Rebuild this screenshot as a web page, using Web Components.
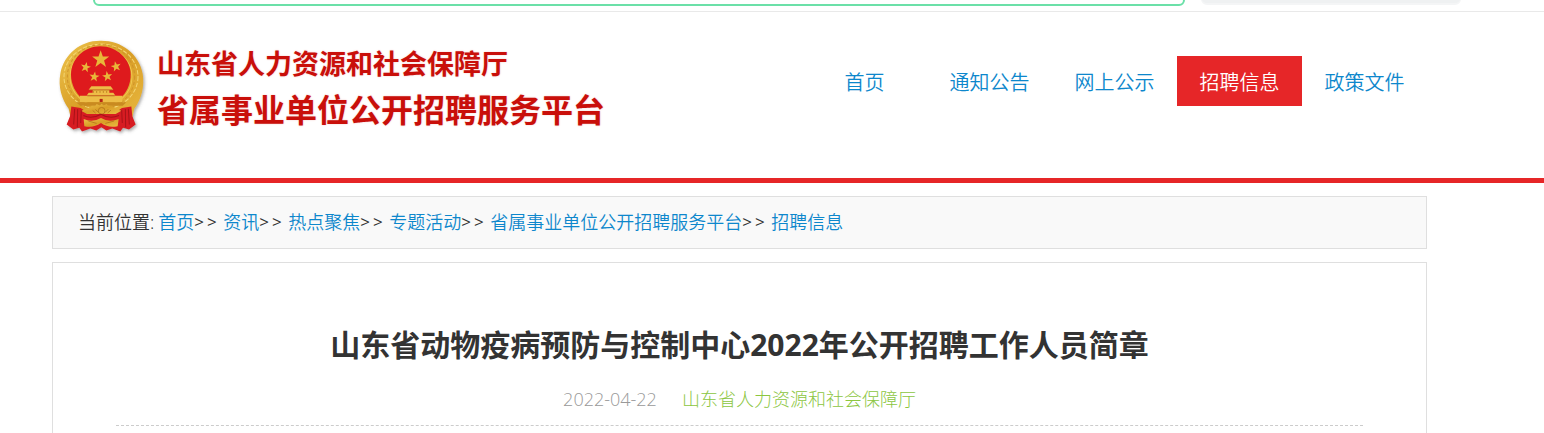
<!DOCTYPE html>
<html lang="zh-CN">
<head>
<meta charset="utf-8">
<meta name="viewport" content="width=device-width, initial-scale=1">
<title>山东省动物疫病预防与控制中心2022年公开招聘工作人员简章</title>
<style>
  body {
    margin: 0;
    min-height: 100vh;
    display: flex;
    flex-direction: column;
    background: #fff;
    color: #333;
    font: 18px/26px "Open Sans", "Noto Sans CJK SC", sans-serif;
    --brand: #e62628;
    --link: #0d87cc;
    --line: #dfdfdf;
    --gutter-start: 52px;
    --gutter-end: 117px;
  }
  article-card { flex: 1; }
</style>
</head>
<body>
<top-strip></top-strip>
<site-header>
  <site-logo slot="logo">
    <span slot="org">山东省人力资源和社会保障厅</span>
    <span slot="platform">省属事业单位公开招聘服务平台</span>
  </site-logo>
  <nav-item>首页</nav-item>
  <nav-item>通知公告</nav-item>
  <nav-item>网上公示</nav-item>
  <nav-item active>招聘信息</nav-item>
  <nav-item>政策文件</nav-item>
</site-header>
<bread-crumbs>
  <span slot="label">当前位置:</span>
  <crumb-link>首页</crumb-link>
  <crumb-link>资讯</crumb-link>
  <crumb-link>热点聚焦</crumb-link>
  <crumb-link>专题活动</crumb-link>
  <crumb-link>省属事业单位公开招聘服务平台</crumb-link>
  <crumb-link last>招聘信息</crumb-link>
</bread-crumbs>
<article-card>
  <span slot="title">山东省动物疫病预防与控制中心2022年公开招聘工作人员简章</span>
  <time slot="date" datetime="2022-04-22">2022-04-22</time>
  <span slot="source">山东省人力资源和社会保障厅</span>
</article-card>

<script>
const define = (name, html) => customElements.define(name, class extends HTMLElement {
  constructor() {
    super();
    this.attachShadow({ mode: "open" }).innerHTML = html;
  }
});

define("top-strip", `
  <style>
    :host { display: block; }
    form {
      display: flex; align-items: flex-end; gap: 16px;
      height: 11px; overflow: hidden; padding: 0 83px 0 93px;
      border-bottom: 1px solid #e9e9e9; box-sizing: content-box;
    }
    input {
      flex: 1; min-width: 0; height: 38px; box-sizing: border-box; margin: 0 0 5px;
      border: 2px solid #6be0a8; border-radius: 6px; background: #fff; outline: 0;
    }
    button {
      width: 260px; height: 38px; box-sizing: border-box; margin: 0 0 6px; padding: 0;
      border: 1px solid #f4f5f6; border-bottom-width: 2px; border-radius: 6px; background: #eff1f2;
    }
  </style>
  <form><input type="text" aria-label="地址"><button type="button" aria-label="搜索"></button></form>`);

define("state-emblem", `
  <style>:host { display: block; } svg { display: block; width: 90px; height: 98px; }</style>
  <svg viewBox="24 12 270 288" preserveAspectRatio="none" role="img" aria-label="徽标">
    <defs>
      <linearGradient id="gold" x1="0" y1="0" x2="1" y2="1">
        <stop offset="0" stop-color="#edc44d"/><stop offset=".5" stop-color="#d99e27"/><stop offset="1" stop-color="#eabb42"/>
      </linearGradient>
      <filter id="shade" x="-20%" y="-20%" width="140%" height="140%">
        <feDropShadow dx="4" dy="5" stdDeviation="4" flood-color="#555" flood-opacity=".5"/>
      </filter>
      <path id="star" d="M0-10 2.4-3.2 9.5-3.1 3.8 1.2 5.9 8.1 0 4-5.9 8.1-3.8 1.2-9.5-3.1-2.4-3.2Z"/>
    </defs>
    <g filter="url(#shade)">
      <path fill="url(#gold)" d="M154 20C94 18 42 58 31 117c-7 38 4 74 25 103l8 34 30 20h121l30-20 8-34c22-30 31-66 25-103C267 58 214 20 154 20Z"/>
      <path fill="#d71d20" d="M64 213l28 5 20 13 42-5 42 5 20-13 28-5 3 29 10 24-20 15-18-5-8 11-24-9-18 6-15-10-15 10-18-6-25 9-8-11-18 5-20-15 10-24Z"/>
    </g>
    <g fill="none">
      <ellipse cx="153" cy="126" rx="111" ry="96" stroke="#f4d674" stroke-width="3" stroke-dasharray="13 5"/>
      <ellipse cx="153" cy="126" rx="101" ry="94" stroke="#cf932a" stroke-width="3" stroke-dasharray="9 7"/>
      <ellipse cx="153" cy="126" rx="93" ry="87" stroke="#f0c74f" stroke-width="3"/>
    </g>
    <path fill="#de1a1d" d="M151 36c-49 0-88 37-88 83 0 30 14 54 33 70 30 10 84 10 115 0 18-16 31-40 31-69 0-46-41-84-91-84Z"/>
    <g fill="#e9b739">
      <use href="#star" transform="translate(152 75) scale(2.7)"/>
      <use href="#star" transform="translate(107 98) rotate(12) scale(1.6)"/>
      <use href="#star" transform="translate(198 96) rotate(-12) scale(1.6)"/>
      <use href="#star" transform="translate(133 126) rotate(8) scale(1.6)"/>
      <use href="#star" transform="translate(172 125) rotate(-8) scale(1.6)"/>
    </g>
    <g fill="#edbd47">
      <path d="M124 154h58l8 10h-74Z"/>
      <path d="M128 165h50v8h-50ZM116 173h74l6 8h-86Z"/>
      <path d="M90 182h127v18H90Z"/>
    </g>
    <path stroke="#a96412" stroke-width="2" fill="none" d="M118 165h70M112 182h82M130 168v5m10-5v5m10-5v5m10-5v5m10-5v5"/>
    <path fill="#b62015" d="M149 191h9v9h-9Z"/>
    <path fill="#c98a20" d="M78 201h151l-11 10H91Z"/>
    <g fill="url(#gold)">
      <path d="M116 219l10-8 8 3 6-8 9 4 6-5 6 5 9-4 6 8 8-3 10 8 20 7-17 9h-86l-18-9Z"/>
      <path d="M101 250q25 12 52-3 26 15 53 3l-3 21q-27 7-50-9-25 16-50 9Z"/>
    </g>
    <g fill="none" stroke="#aa6916" stroke-width="2">
      <circle cx="155" cy="226" r="10"/><path d="M136 222l10 9m-18-6 9 8m38-12-10 10m18-7-10 8M115 256l25 7m52-7-26 7"/>
    </g>
    <g fill="none" stroke="#a81318" stroke-width="3">
      <path d="M74 220l-3 46m12-45-1 53m12-50-2 38m143-42 3 46m-12-45 1 53m-12-50 2 38M100 240q25 12 53-4 26 16 54 4"/>
    </g>
  </svg>`);

define("site-logo", `
  <style>
    :host { display: block; }
    a { display: flex; align-items: center; gap: 9px; color: #c90f0a; text-decoration: none; font-weight: 700; white-space: nowrap; }
    .names { display: flex; flex-direction: column; line-height: 46px; text-shadow: 0 0 2px #f3c9c6; }
    .org { font-size: 27px; }
    .platform { font-size: 32px; }
  </style>
  <a href="#"><state-emblem></state-emblem>
    <span class="names"><span class="org"><slot name="org"></slot></span><span class="platform"><slot name="platform"></slot></span></span>
  </a>`);

define("nav-item", `
  <style>
    :host { display: block; }
    a { display: block; width: 125px; padding-top: 4px; font-size: 20px; font-weight: 350; line-height: 46px; text-align: center; text-decoration: none; color: var(--link); white-space: nowrap; }
    :host([active]) a { background: var(--brand); color: #fff; }
  </style>
  <a href="#"><slot></slot></a>`);

define("site-header", `
  <style>
    :host { display: block; border-bottom: 5px solid var(--brand); }
    header { display: flex; align-items: flex-start; justify-content: space-between; padding: 26px var(--gutter-end) 42px var(--gutter-start); }
    .logo { padding-left: 6px; }
    nav { display: flex; padding-top: 18px; }
  </style>
  <header><div class="logo"><slot name="logo"></slot></div><nav aria-label="主导航"><slot></slot></nav></header>`);

define("crumb-link", `
  <style>
    :host { display: flex; }
    a { color: var(--link); text-decoration: none; font-weight: 350; }
    .sep { display: flex; gap: 3px; width: 29px; font-size: 17px; }
    :host([last]) .sep { display: none; }
  </style>
  <a href="#"><slot></slot></a><span class="sep" aria-hidden="true"><span>&gt;</span><span>&gt;</span></span>`);

define("bread-crumbs", `
  <style>
    :host { display: block; margin: 13px var(--gutter-end) 13px var(--gutter-start); }
    nav { display: flex; flex-wrap: wrap; padding: 12px 25px 13px; border: 1px solid var(--line); background: #f9f9f9; white-space: nowrap; }
    .label { margin-right: 4px; font-weight: 350; }
  </style>
  <nav aria-label="当前位置"><span class="label"><slot name="label"></slot></span><slot></slot></nav>`);

define("article-card", `
  <style>
    :host { display: block; margin: 0 var(--gutter-end) 0 var(--gutter-start); padding: 0 63px; border: 1px solid var(--line); border-bottom: 0; background: #fff; }
    header { padding: 60px 0 13px; border-bottom: 1px dashed #ccc; text-align: center; }
    h1 { margin: 0; font-size: 30px; line-height: 44px; font-weight: 700; }
    p { display: flex; justify-content: center; gap: 25px; margin: 19px 0 0; font-weight: 300; color: #999; }
    .source { color: #8cc63f; }
  </style>
  <article><header>
    <h1><slot name="title"></slot></h1>
    <p><slot name="date"></slot><span class="source"><slot name="source"></slot></span></p>
  </header></article>`);
</script>
</body>
</html>
